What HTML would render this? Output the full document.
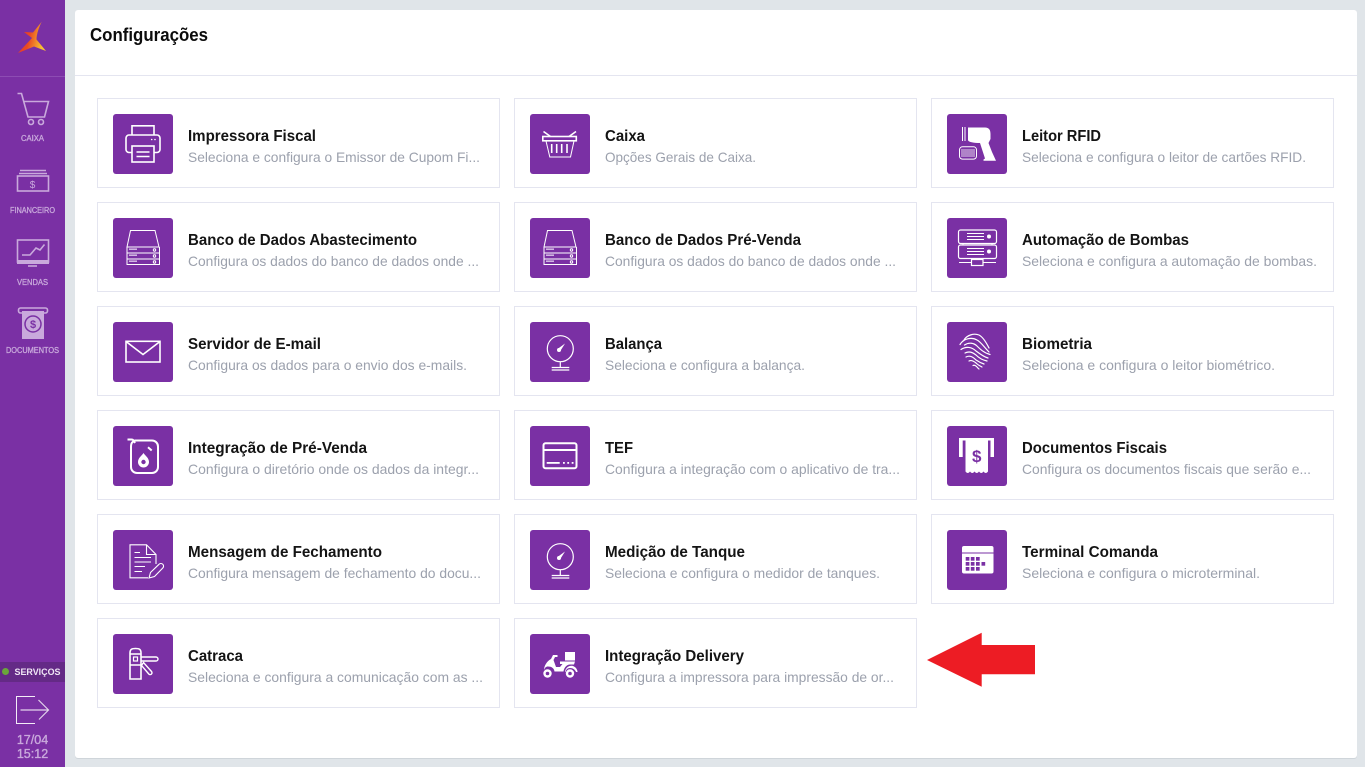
<!DOCTYPE html>
<html lang="pt-BR"><head><meta charset="utf-8"><title>Configurações</title>
<style>
html,body{margin:0;padding:0;width:1365px;height:767px;overflow:hidden;background:#e0e5e9}
svg{display:block}
text{font-family:"Liberation Sans",sans-serif}
.t{font-size:16px;font-weight:bold;fill:#141414;transform:translateY(-1px)}
.s{font-size:14px;fill:#9ca1ad}
.n{font-size:8px;fill:#c9a9dc;stroke:#c9a9dc;stroke-width:.3;text-anchor:start}
.w{fill:none;stroke:#fff;stroke-width:1.6}
.w2{fill:none;stroke:#fff;stroke-width:1}
.f{fill:#fff}
.p{fill:#7a30a4}
.card{fill:#fff;stroke:#e4e5f0;stroke-width:1}
.sb{fill:none;stroke:#c9a9dc;stroke-width:1.6}
.sf{fill:#c9a9dc}
</style></head><body>
<svg width="1365" height="767" viewBox="0 0 1365 767" xmlns="http://www.w3.org/2000/svg">
<defs>
<linearGradient id="lg" x1="0" y1="0" x2="1" y2="0.25"><stop offset="0" stop-color="#e4302e"/><stop offset=".5" stop-color="#ea4a22"/><stop offset=".78" stop-color="#f2902a"/><stop offset="1" stop-color="#f7c233"/></linearGradient>
<symbol id="db" viewBox="0 0 60 60" overflow="visible">
<path class="w2" d="M14 29 17.5 12.5H42L46 29ZM14 29V46.5H46.500V29M14 35H46.500M14 41H46.500"/>
<path d="M16 30.500h8v1.400h-8zM16 36.500h8v1.400h-8zM16 42.500h8v1.400h-8z" fill="#ddc8ea"/>
<circle class="w2" cx="41.500" cy="32" r="1.200"/><circle class="w2" cx="41.500" cy="38" r="1.200"/><circle class="w2" cx="41.500" cy="44" r="1.200"/>
</symbol>
<symbol id="ga" viewBox="0 0 60 60" overflow="visible">
<circle class="w" cx="30.300" cy="26.700" r="13" style="stroke-width:1.200"/>
<path class="f" d="M27.500 27 35 21.500 30 29.500Z"/><circle class="f" cx="29" cy="28" r="2"/>
<path class="w" style="stroke-width:1.200" d="M30.300 39.700V45M21.700 45.500H39.300M21.700 48H39.300"/>
</symbol>
</defs>

<rect width="1365" height="767" fill="#e0e5e9"/>
<!-- sidebar -->
<rect width="65" height="767" fill="#7a30a4"/>
<rect y="76" width="65" height="1" fill="#8d4cb3"/>
<path fill="url(#lg)" d="M41.700 21.700 33 32.500 24 32 32 38 18 53 34 46.500 46 51 36.500 39.500C36.500 34 39 27 41.700 21.700Z"/>

<!-- cart -->
<path class="sb" d="M17.500 93.500H21.500L28 117H44.500L48.500 101.500H24"/>
<circle class="sb" cx="31" cy="122" r="2.500"/><circle class="sb" cx="41" cy="122" r="2.500"/>
<text class="n" x="21" y="141" textLength="23" lengthAdjust="spacingAndGlyphs">CAIXA</text>
<!-- financeiro -->
<path class="sb" d="M19 173.500H47M20 170.500H46"/>
<rect class="sb" x="17.500" y="176" width="31" height="15"/>
<text x="32.500" y="188" font-size="10" fill="#c9a9dc" text-anchor="middle">$</text>
<text class="n" x="10" y="213" textLength="45" lengthAdjust="spacingAndGlyphs">FINANCEIRO</text>
<!-- vendas -->
<rect class="sb" x="17.500" y="240" width="31" height="22"/>
<rect class="sf" x="17" y="260" width="32" height="4"/>
<path class="sb" d="M22 255H30L36 248 40 250 44.500 244.500"/>
<path class="sb" d="M28 266H37"/>
<text class="n" x="17" y="285" textLength="31" lengthAdjust="spacingAndGlyphs">VENDAS</text>
<!-- documentos -->
<rect class="sb" x="18.500" y="308" width="29" height="5" rx="2"/>
<rect class="sf" x="22" y="311" width="22" height="28"/>
<circle cx="33" cy="324" r="8" fill="none" stroke="#7a30a4" stroke-width="1.500"/>
<text x="33" y="328" font-size="11" font-weight="bold" fill="#7a30a4" text-anchor="middle">$</text>
<text class="n" x="6" y="353" textLength="53" lengthAdjust="spacingAndGlyphs">DOCUMENTOS</text>

<!-- servicos -->
<rect y="662" width="65" height="20" fill="#642a86"/>
<circle cx="5.500" cy="671.500" r="3.500" fill="#6aa63a"/>
<text x="14.500" y="675" font-size="9" font-weight="bold" fill="#f0e6f5" textLength="46" lengthAdjust="spacingAndGlyphs">SERVIÇOS</text>
<path fill="none" stroke="#f3ecf7" stroke-width="1" d="M35 696.500H16.500V723.500H35"/>
<path fill="none" stroke="#e3d3ec" stroke-width="1.200" d="M20.500 710H48M38.500 700 48.500 710 39 719.500"/>
<text x="32.500" y="744" font-size="12.500" fill="#c9a9dc" text-anchor="middle" stroke="#c9a9dc" stroke-width=".35">17/04</text>
<text x="32.500" y="758" font-size="12.500" fill="#c9a9dc" text-anchor="middle" stroke="#c9a9dc" stroke-width=".35">15:12</text>

<!-- panel -->
<rect x="75" y="11" width="1282" height="748" rx="3" fill="#cfd5da"/>
<rect x="75" y="10" width="1282" height="748" rx="3" fill="#fff"/>
<rect x="75" y="75" width="1282" height="1" fill="#e4e5f0"/>
<text x="90" y="41" font-size="18" font-weight="bold" fill="#0c0c0c" textLength="118" lengthAdjust="spacingAndGlyphs">Configurações</text>

<!-- cards -->
<g>
<rect class="card" x="97.500" y="98.500" width="402" height="89"/><rect class="card" x="514.500" y="98.500" width="402" height="89"/><rect class="card" x="931.500" y="98.500" width="402" height="89"/>
<rect class="card" x="97.500" y="202.500" width="402" height="89"/><rect class="card" x="514.500" y="202.500" width="402" height="89"/><rect class="card" x="931.500" y="202.500" width="402" height="89"/>
<rect class="card" x="97.500" y="306.500" width="402" height="89"/><rect class="card" x="514.500" y="306.500" width="402" height="89"/><rect class="card" x="931.500" y="306.500" width="402" height="89"/>
<rect class="card" x="97.500" y="410.500" width="402" height="89"/><rect class="card" x="514.500" y="410.500" width="402" height="89"/><rect class="card" x="931.500" y="410.500" width="402" height="89"/>
<rect class="card" x="97.500" y="514.500" width="402" height="89"/><rect class="card" x="514.500" y="514.500" width="402" height="89"/><rect class="card" x="931.500" y="514.500" width="402" height="89"/>
<rect class="card" x="97.500" y="618.500" width="402" height="89"/><rect class="card" x="514.500" y="618.500" width="402" height="89"/>
</g>

<!-- icon tiles -->
<g class="p">
<rect x="113" y="114" width="60" height="60" rx="3"/><rect x="530" y="114" width="60" height="60" rx="3"/><rect x="947" y="114" width="60" height="60" rx="3"/>
<rect x="113" y="218" width="60" height="60" rx="3"/><rect x="530" y="218" width="60" height="60" rx="3"/><rect x="947" y="218" width="60" height="60" rx="3"/>
<rect x="113" y="322" width="60" height="60" rx="3"/><rect x="530" y="322" width="60" height="60" rx="3"/><rect x="947" y="322" width="60" height="60" rx="3"/>
<rect x="113" y="426" width="60" height="60" rx="3"/><rect x="530" y="426" width="60" height="60" rx="3"/><rect x="947" y="426" width="60" height="60" rx="3"/>
<rect x="113" y="530" width="60" height="60" rx="3"/><rect x="530" y="530" width="60" height="60" rx="3"/><rect x="947" y="530" width="60" height="60" rx="3"/>
<rect x="113" y="634" width="60" height="60" rx="3"/><rect x="530" y="634" width="60" height="60" rx="3"/>
</g>

<!-- printer -->
<g transform="translate(113 114)">
<path class="w" d="M19 21V11.800H41V21"/>
<path class="w" d="M19 38.500H16A3 3 0 0 1 13 35.500V24A3 3 0 0 1 16 21H44A3 3 0 0 1 47 24V35.500A3 3 0 0 1 44 38.500H41"/>
<rect class="w" x="19" y="32" width="22" height="16"/>
<path class="w" d="M23.500 38H36.500M23.500 42.500H36.500"/>
<circle class="f" cx="38.700" cy="25.500" r=".8"/><circle class="f" cx="42" cy="25.500" r=".8"/>
</g>
<!-- basket -->
<g transform="translate(530 114)">
<rect class="w" x="12.800" y="22.500" width="33.500" height="4.300"/>
<path class="w2" d="M16 27 19.800 43H40.500L44 27"/>
<path class="w" d="M13.500 17.500 20.500 22.500M46 17.500 39 22.500M21.700 30V39M26.700 30V39M31.700 30V39M37 30V39"/>
</g>
<!-- reader -->
<g transform="translate(947 114)">
<path class="f" d="M21 13.500H38C42 13.500 43.500 16 43.500 20V25L41.500 29 45 38 49 46.700H36.500V45.500L38 44.500 33 29C27 29 21 28 21 26Z"/>
<path class="w2" d="M15.500 13V27M18 13V27"/>
<rect class="w2" x="12.500" y="32.800" width="17" height="12.300" rx="3"/>
<path stroke="#fff" stroke-width=".8" fill="none" d="M15 35V43M17 35V43M19 35V43M21 35V43M23 35V43M25 35V43M27 35V43"/>
</g>

<use href="#db" x="113" y="218" width="60" height="60"/>
<use href="#db" x="530" y="218" width="60" height="60"/>

<!-- server -->
<g transform="translate(947 218)">
<rect class="w" style="stroke-width:1.200" x="11.500" y="12" width="38" height="13.500" rx="2"/>
<rect class="w" style="stroke-width:1.200" x="11.500" y="27" width="38" height="13.500" rx="2"/>
<path class="w" style="stroke-width:1" d="M20 15.500H37M20 18.500H37M20 21.500H37M20 30.500H37M20 33.500H37M20 36.500H37M16 25.500V27M45 25.500V27M30.500 40.500V42M12 44.500H24M36 44.500H49"/>
<circle class="f" cx="42" cy="18.500" r="2"/><circle class="f" cx="42" cy="33.500" r="2"/>
<rect class="w" style="stroke-width:1.200" x="24.500" y="41.500" width="11.500" height="6"/>
</g>

<!-- mail -->
<g transform="translate(113 322)">
<rect class="w" x="13" y="19.300" width="34" height="20.700"/>
<path class="w" d="M13 19.500 30 32.500 47 19.500"/>
</g>
<use href="#ga" x="530" y="322" width="60" height="60"/>
<!-- fingerprint -->
<g transform="translate(947 322)" fill="none" stroke="#fff" stroke-width="1.200" stroke-linecap="round">
<path d="M17 18C20 13 27 11 32 13 36 15 39 20 42 26"/>
<path d="M13 22.500C17 16 25 15 30 18 34 20 37 25 42 30"/>
<path d="M17.500 23C22 20 27 21 30 24 33 27 37 31 43 32.500"/>
<path d="M14 27.500C19 24 25 25 29 29 33 32 37 35 41 36"/>
<path d="M18 31C22 29 25 30 29 33 32 36 35 38 40 39"/>
<path d="M19 35C23 33 26 35 29 38 32 40 34 41 37 42"/>
<path d="M22 39C24 38 26 38.500 29 41 31 43 33 44 35 45"/>
<path d="M26 43.500C27 43 28 43 29.500 44.500 30.500 45.500 31 46.500 32 47"/>
</g>

<!-- jerrycan -->
<g transform="translate(113 426)">
<path class="w" style="stroke-width:2" d="M22 14.500H39A6 6 0 0 1 45 20.500V41A6 6 0 0 1 39 47H24A6 6 0 0 1 18 41V21C18 17 19 16 22 14.500Z"/>
<path class="w" style="stroke-width:2" d="M14.500 13.500H18.500C20.500 13.500 21 15 22 17"/>
<path class="w" style="stroke-width:2" d="M35 21.300 38.700 24.500"/>
<path class="f" d="M30.500 27C32.500 30 36 32 36 36A5.500 5.500 0 0 1 25 36C25 32 28.500 30 30.500 27Z"/>
<circle class="p" cx="30.500" cy="36" r="2.200"/>
</g>
<!-- tef card -->
<g transform="translate(530 426)">
<rect class="w" style="stroke-width:2" x="13.500" y="17.300" width="33" height="25" rx="2"/>
<rect class="f" x="13" y="23" width="34" height="2"/>
<rect class="f" x="16.700" y="36" width="13" height="1.800"/>
<rect class="f" x="33" y="36" width="1.800" height="1.800"/><rect class="f" x="37.300" y="36" width="1.800" height="1.800"/><rect class="f" x="41.700" y="36" width="1.800" height="1.800"/>
</g>
<!-- receipt -->
<g transform="translate(947 426)">
<path class="f" d="M12 12H47V31H43.500V14.500H41V45.500C39.500 47.500 38 47.500 36.500 45.500 35 47.500 33.500 47.500 32 45.500 30.500 47.500 29 47.500 27.500 45.500 26 47.500 24.500 47.500 23 45.500 21.500 47.500 20 47.500 18.500 45.500V14.500H15.700V31H12Z"/>
<text x="29.700" y="36" font-size="17" font-weight="bold" fill="#7a30a4" text-anchor="middle">$</text>
</g>

<!-- doc pencil -->
<g transform="translate(113 530)">
<path class="w2" style="stroke-width:1.100" d="M35 47.800H17V14.800H33.500L43 24.500V34"/>
<path class="w2" style="stroke-width:1.100" d="M33.500 14.800V24.500H43"/>
<path class="w" style="stroke-width:1.100" d="M21.500 22.500H27M21.500 27.500H38M21.500 32H38M21.500 36.500H32M21.500 41.500H29"/>
<path class="w" style="stroke-width:1.100" d="M36 48 37.500 42.500 46 34.300A2.500 2.500 0 0 1 49.800 38L41.500 46.500Z"/>
</g>
<use href="#ga" x="530" y="530" width="60" height="60"/>
<!-- terminal -->
<g transform="translate(947 530)">
<rect class="f" x="15" y="16" width="31.500" height="27.500" rx="2"/>
<rect class="p" x="15" y="22.500" width="31.500" height="1"/>
<g class="p">
<rect x="18.700" y="27" width="3.700" height="3.700"/><rect x="23.800" y="27" width="3.700" height="3.700"/><rect x="29" y="27" width="3.700" height="3.700"/>
<rect x="18.700" y="32" width="3.700" height="3.700"/><rect x="23.800" y="32" width="3.700" height="3.700"/><rect x="29" y="32" width="3.700" height="3.700"/><rect x="34.500" y="32" width="3.700" height="3.700"/>
<rect x="18.700" y="37" width="3.700" height="3.700"/><rect x="23.800" y="37" width="3.700" height="3.700"/><rect x="29" y="37" width="3.700" height="3.700"/>
</g>
</g>

<!-- catraca -->
<g transform="translate(113 634)">
<path class="w" d="M17 45V19C17 15 19 14.500 22.500 14.500S28 15 28 19V45Z"/>
<path class="w" d="M17 31H28M17 20H28"/>
<rect class="w" style="stroke-width:1.200" x="20.500" y="23" width="4" height="4"/>
<path class="w" style="stroke-width:1.400" d="M28 23H43A2 2 0 0 1 43 27H28"/>
<path class="w" style="stroke-width:1.400" d="M28.500 31.500 30.500 28.500 38.500 37.500A1.800 1.800 0 0 1 35.800 40Z"/>
</g>
<!-- scooter -->
<g transform="translate(530 634)">
<path class="f" d="M35 18H45V26.500H35Z"/>
<path class="f" d="M23 21H27.500V23H25L23.500 26 26 33H30L32.500 30H30V27.500H45L44 30.500H40C37 30.500 34 33.500 33.500 37.500H24.500C24 34 21.500 32.500 18 32.500 16 32.500 15 33.500 14 36 14 32 17 27 21 25Z"/>
<path class="f" d="M35 38C35.500 33 40 31 43 32 46 33 47.500 36 47.500 38H46C45 35.500 43 34 40 34 37 34 36 36 35.500 38Z"/>
<circle cx="17.500" cy="39.500" r="3" fill="none" stroke="#fff" stroke-width="2.400"/>
<circle cx="40" cy="39.500" r="3" fill="none" stroke="#fff" stroke-width="2.400"/>
</g>

<!-- texts -->
<text class="t" x="188" y="142" textLength="128" lengthAdjust="spacingAndGlyphs">Impressora Fiscal</text>
<text class="s" x="188" y="162" textLength="292" lengthAdjust="spacingAndGlyphs">Seleciona e configura o Emissor de Cupom Fi...</text>
<text class="t" x="605" y="142" textLength="40" lengthAdjust="spacingAndGlyphs">Caixa</text>
<text class="s" x="605" y="162" textLength="151" lengthAdjust="spacingAndGlyphs">Opções Gerais de Caixa.</text>
<text class="t" x="1022" y="142" textLength="79" lengthAdjust="spacingAndGlyphs">Leitor RFID</text>
<text class="s" x="1022" y="162" textLength="284" lengthAdjust="spacingAndGlyphs">Seleciona e configura o leitor de cartões RFID.</text>

<text class="t" x="188" y="246" textLength="229" lengthAdjust="spacingAndGlyphs">Banco de Dados Abastecimento</text>
<text class="s" x="188" y="266" textLength="291" lengthAdjust="spacingAndGlyphs">Configura os dados do banco de dados onde ...</text>
<text class="t" x="605" y="246" textLength="196" lengthAdjust="spacingAndGlyphs">Banco de Dados Pré-Venda</text>
<text class="s" x="605" y="266" textLength="291" lengthAdjust="spacingAndGlyphs">Configura os dados do banco de dados onde ...</text>
<text class="t" x="1022" y="246" textLength="167" lengthAdjust="spacingAndGlyphs">Automação de Bombas</text>
<text class="s" x="1022" y="266" textLength="295" lengthAdjust="spacingAndGlyphs">Seleciona e configura a automação de bombas.</text>

<text class="t" x="188" y="350" textLength="133" lengthAdjust="spacingAndGlyphs">Servidor de E-mail</text>
<text class="s" x="188" y="370" textLength="279" lengthAdjust="spacingAndGlyphs">Configura os dados para o envio dos e-mails.</text>
<text class="t" x="605" y="350" textLength="57" lengthAdjust="spacingAndGlyphs">Balança</text>
<text class="s" x="605" y="370" textLength="200" lengthAdjust="spacingAndGlyphs">Seleciona e configura a balança.</text>
<text class="t" x="1022" y="350" textLength="70" lengthAdjust="spacingAndGlyphs">Biometria</text>
<text class="s" x="1022" y="370" textLength="253" lengthAdjust="spacingAndGlyphs">Seleciona e configura o leitor biométrico.</text>

<text class="t" x="188" y="454" textLength="179" lengthAdjust="spacingAndGlyphs">Integração de Pré-Venda</text>
<text class="s" x="188" y="474" textLength="291" lengthAdjust="spacingAndGlyphs">Configura o diretório onde os dados da integr...</text>
<text class="t" x="605" y="454" textLength="28" lengthAdjust="spacingAndGlyphs">TEF</text>
<text class="s" x="605" y="474" textLength="295" lengthAdjust="spacingAndGlyphs">Configura a integração com o aplicativo de tra...</text>
<text class="t" x="1022" y="454" textLength="145" lengthAdjust="spacingAndGlyphs">Documentos Fiscais</text>
<text class="s" x="1022" y="474" textLength="289" lengthAdjust="spacingAndGlyphs">Configura os documentos fiscais que serão e...</text>

<text class="t" x="188" y="558" textLength="194" lengthAdjust="spacingAndGlyphs">Mensagem de Fechamento</text>
<text class="s" x="188" y="578" textLength="293" lengthAdjust="spacingAndGlyphs">Configura mensagem de fechamento do docu...</text>
<text class="t" x="605" y="558" textLength="140" lengthAdjust="spacingAndGlyphs">Medição de Tanque</text>
<text class="s" x="605" y="578" textLength="275" lengthAdjust="spacingAndGlyphs">Seleciona e configura o medidor de tanques.</text>
<text class="t" x="1022" y="558" textLength="136" lengthAdjust="spacingAndGlyphs">Terminal Comanda</text>
<text class="s" x="1022" y="578" textLength="238" lengthAdjust="spacingAndGlyphs">Seleciona e configura o microterminal.</text>

<text class="t" x="188" y="662" textLength="55" lengthAdjust="spacingAndGlyphs">Catraca</text>
<text class="s" x="188" y="682" textLength="295" lengthAdjust="spacingAndGlyphs">Seleciona e configura a comunicação com as ...</text>
<text class="t" x="605" y="662" textLength="139" lengthAdjust="spacingAndGlyphs">Integração Delivery</text>
<text class="s" x="605" y="682" textLength="289" lengthAdjust="spacingAndGlyphs">Configura a impressora para impressão de or...</text>

<!-- arrow -->
<path d="M927 660 981.700 632.700V645H1035V674.300H981.700V686.700Z" fill="#ed1c24"/>
</svg>
</body></html>
